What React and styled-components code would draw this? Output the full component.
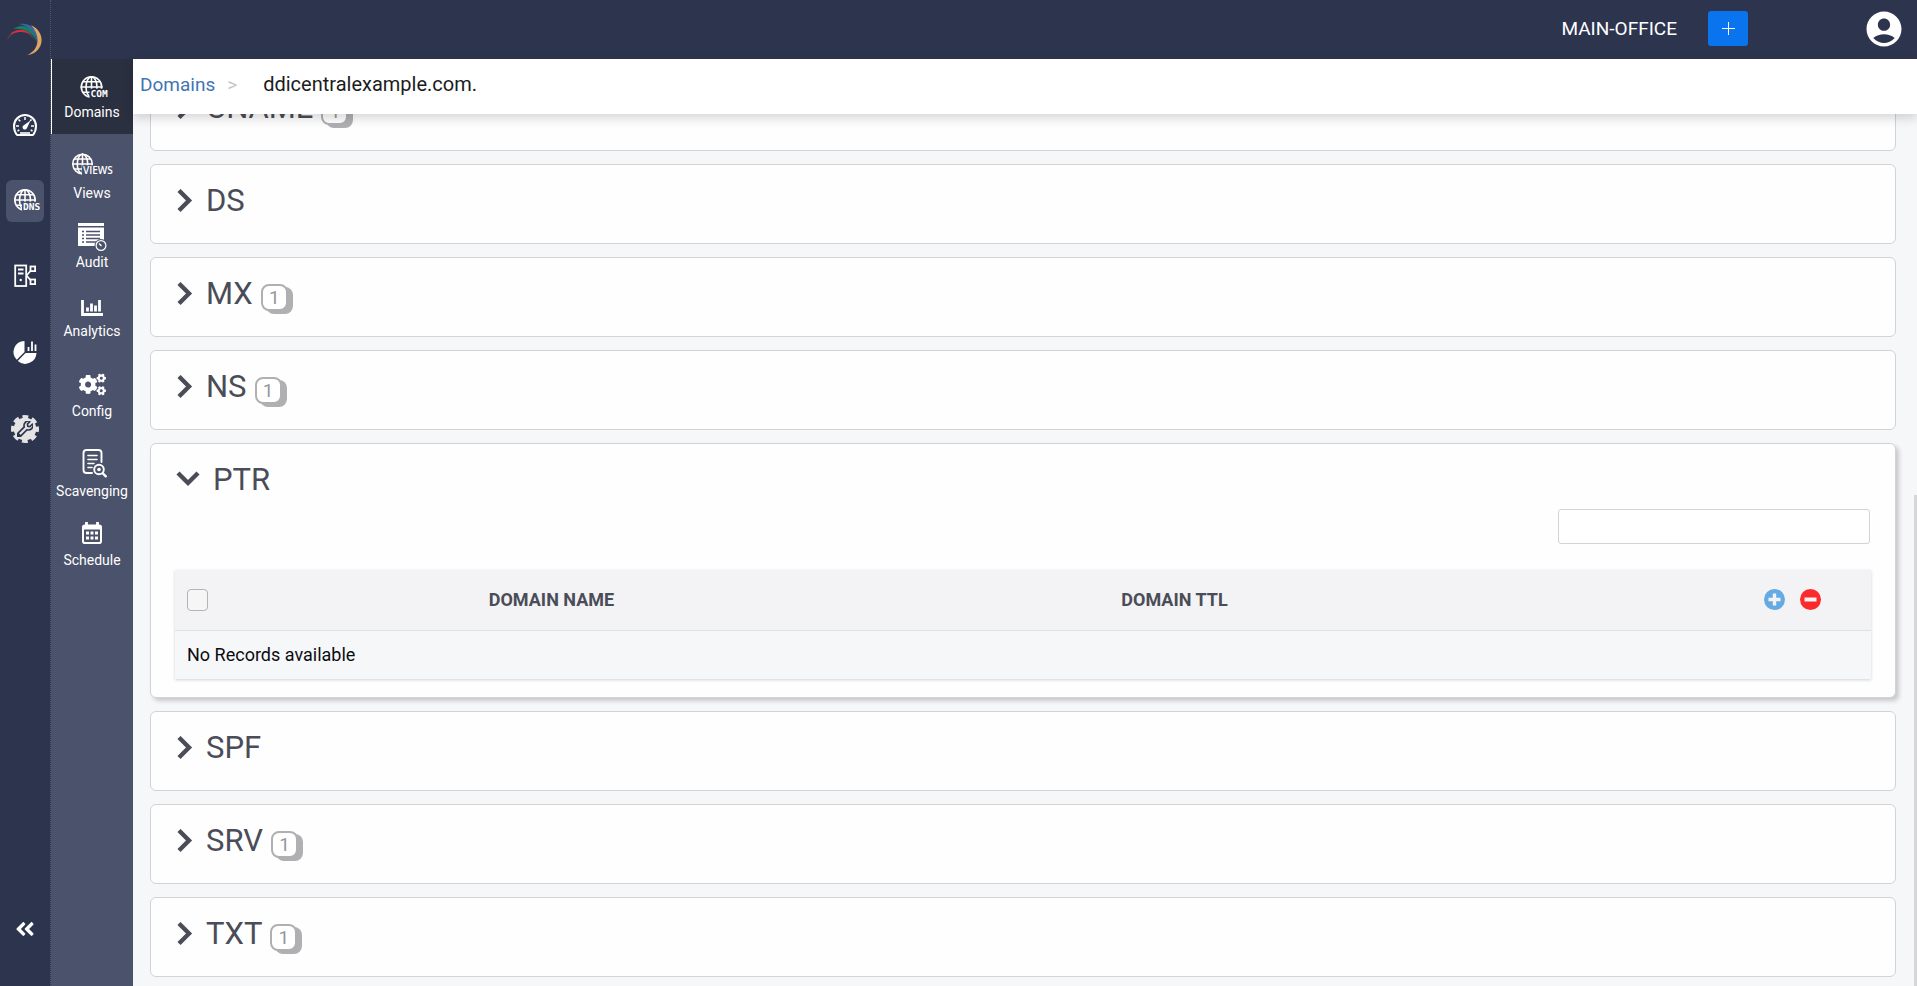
import { useLayoutEffect, useRef, useState } from "react";
import styled, { createGlobalStyle, css } from "styled-components";
import { FaAngleDoubleLeft, FaCogs, FaWrench } from "react-icons/fa";
import { MdAccountCircle } from "react-icons/md";

/* ---------------------------------- STYLE --------------------------------- */

const colors = {
    navy: "#2d344e",
    slate: "#4b526b",
    active: "#2b3041",
    page: "#f6f7f9",
    border: "#d2d3d5",
    title: "#4a4d58",
    badge: "#b0b0b2",
    link: "#3f75b5",
    blue: "#0a74ee",
};

const GlobalStyle = createGlobalStyle`
    * {
        box-sizing: border-box;
    }
    body {
        margin: 0;
        font-family: Roboto, "Liberation Sans", sans-serif;
        background: ${colors.page};
    }
    button {
        border: none;
        padding: 0;
        background: none;
        font-family: inherit;
        cursor: pointer;
    }
`;

const Shell = styled.div`
    display: grid;
    grid-template-columns: 51px 1fr;
    height: 100vh;
    overflow: hidden;
`;

const Rail = styled.nav`
    display: flex;
    flex-direction: column;
    align-items: center;
    background: ${colors.navy};
    border-right: 1px dotted #55575f;
`;

const Logo = styled.svg`
    width: 38px;
    height: 36px;
    margin: 22px 0 46px;
`;

const RailList = styled.div`
    display: flex;
    flex-direction: column;
    gap: 34px;
    flex: 1;
`;

const RailButton = styled.button`
    width: 38px;
    height: 42px;
    border-radius: 6px;
    background: ${props => props.$active ? colors.slate : "transparent"};
    svg {
        display: block;
    }
`;

const CollapseButton = styled.button`
    display: flex;
    align-items: center;
    justify-content: center;
    width: 38px;
    height: 42px;
    margin-bottom: 36px;
    color: white;
    font-size: 22px;
`;

const Content = styled.div`
    display: flex;
    flex-direction: column;
    min-width: 0;
    min-height: 0;
`;

const TopBar = styled.header`
    display: flex;
    align-items: center;
    justify-content: flex-end;
    height: 59px;
    flex-shrink: 0;
    padding: 0 15px 2px 0;
    background: ${colors.navy};
`;

const Office = styled.span`
    color: white;
    font-size: 19px;
`;

const AddButton = styled.button`
    display: flex;
    align-items: center;
    justify-content: center;
    width: 40px;
    height: 35px;
    margin: 0 118px 0 31px;
    border-radius: 3px;
    background: ${colors.blue};
`;

const UserButton = styled.button`
    display: flex;
    color: white;
    font-size: 42px;
    margin: 0 -3px;
`;

const Body = styled.div`
    display: grid;
    grid-template-columns: 82px 1fr;
    flex: 1;
    min-height: 0;
`;

const SubNav = styled.nav`
    background: ${colors.slate};
`;

const SubLink = styled.a`
    display: flex;
    flex-direction: column;
    align-items: center;
    padding-top: ${props => props.$spaced ? "26px" : "15px"};
    color: white;
    font-size: 14px;
    line-height: 20px;
    text-decoration: none;
    ${props => props.$active && css`
        padding: 9px 1px 12px 0;
        background: ${colors.active};
        border-left: 1px solid white;
    `}
`;

const Main = styled.main`
    position: relative;
    display: flex;
    flex-direction: column;
    min-width: 0;
    min-height: 0;
`;

const Breadcrumb = styled.div`
    display: flex;
    align-items: center;
    z-index: 1;
    height: 55px;
    flex-shrink: 0;
    padding: 0 7px 5px;
    background: white;
    box-shadow: 0 4px 10px rgba(0, 0, 0, 0.16);
    font-size: 19px;
    a {
        color: ${colors.link};
        text-decoration: none;
    }
    span {
        margin: 0 26px 0 12px;
        color: #c6c6c8;
    }
    strong {
        color: #1b1b22;
        font-size: 20px;
        font-weight: 400;
    }
`;

const RecordList = styled.div`
    display: flex;
    flex-direction: column;
    gap: 13px;
    flex: 1;
    min-height: 0;
    overflow-y: auto;
    scrollbar-width: none;
    padding: 0 21px 9px 17px;
`;

const ScrollThumb = styled.div`
    position: absolute;
    right: 0;
    bottom: 0;
    width: 3px;
    height: 53%;
    background: #d6d7d9;
`;

const Card = styled.section`
    flex-shrink: 0;
    min-height: 80px;
    padding: 18px 24px;
    background: #fefefe;
    border: 1px solid ${colors.border};
    border-radius: 6px;
    box-shadow: ${props => props.$open ? "3px 3px 4px #c9c9cb" : "none"};
`;

const CardHeader = styled.button`
    display: flex;
    align-items: center;
    height: 36px;
    padding-left: ${props => props.$open ? "1px" : "2px"};
    color: ${colors.title};
    font-size: 31px;
    line-height: 36px;
`;

const CardTitle = styled.span`
    display: flex;
    align-items: baseline;
    gap: 8px;
    margin-left: 13px;
`;

const Badge = styled.span`
    width: 27px;
    border: 2px solid ${colors.badge};
    border-radius: 8px;
    box-shadow: 5px 3px 0 ${colors.badge};
    background: white;
    color: #97979b;
    font-size: 19px;
    line-height: 23px;
    text-align: center;
`;

const SearchRow = styled.div`
    display: flex;
    justify-content: flex-end;
    margin: 11px 1px 26px 0;
`;

const SearchInput = styled.input`
    width: 312px;
    height: 35px;
    padding: 0 8px;
    border: 1px solid ${colors.border};
    border-radius: 3px;
    background: white;
    font-size: 16px;
    outline: none;
`;

const Table = styled.table`
    width: 100%;
    table-layout: fixed;
    border-collapse: collapse;
    box-shadow: 0 1px 3px rgba(0, 0, 0, 0.18);
    font-size: 18px;
    th {
        height: 60px;
        padding: 0;
        background: #f3f3f5;
        border-bottom: 1px solid #e0e1e3;
        color: ${colors.title};
        font-weight: 700;
        text-align: left;
    }
    th:first-child {
        width: 18.5%;
        padding-left: 12px;
    }
    th:nth-child(2) {
        width: 37.3%;
    }
    td {
        height: 49px;
        padding: 0 12px;
        background: ${colors.page};
        color: #0c0c10;
    }
`;

const CheckBox = styled.input`
    appearance: none;
    display: block;
    width: 21px;
    height: 22px;
    margin: 0;
    border: 1px solid #b4b4b6;
    border-radius: 4px;
    background: #f6f6f7;
`;

const Actions = styled.div`
    display: flex;
    justify-content: flex-end;
    gap: 15px;
    padding-right: 50px;
`;

const RoundButton = styled.button`
    display: flex;
    align-items: center;
    justify-content: center;
    width: 21px;
    height: 21px;
    border-radius: 50%;
    background: ${props => props.$danger ? "#fb2a2d" : "#65aae3"};
`;

/* ---------------------------------- ICONS --------------------------------- */

const Globe = ({ cx, cy, r }) => (
    <g fill="none" stroke="white" strokeWidth="1.6">
        <circle cx={cx} cy={cy} r={r - 0.8} />
        <ellipse cx={cx} cy={cy} rx={r * 0.5} ry={r - 0.8} />
        <path d={`M${cx} ${cy - r}V${cy + r}M${cx - r} ${cy}H${cx + r}`} />
        <path d={`M${cx - r * 0.84} ${cy - r * 0.48}H${cx + r * 0.84}M${cx - r * 0.84} ${cy + r * 0.48}H${cx + r * 0.84}`} />
    </g>
);

const GlobeLabel = ({ x, y, size, width, bg, family, weight, children }) => (
    <>
        <rect x={x - 1} y={y - size * 0.72 - 1.5} width={width + 3} height={size * 0.72 + 5} fill={bg} />
        <text x={x} y={y} fontSize={size} fontWeight={weight} fontFamily={family} fill="white">{children}</text>
    </>
);

const RailIcon = ({ children }) => <svg width="38" height="42" viewBox="0 0 38 42" aria-hidden="true">{children}</svg>;
const SubIcon = ({ children }) => <svg width="48" height="34" viewBox="0 0 48 34" aria-hidden="true">{children}</svg>;

const monoFont = "'DejaVu Sans Mono', monospace";

const GaugeIcon = () => (
    <RailIcon>
        <path d="M11 31C9 28.500 8 25.500 8 22A11 11 0 0 1 30 22C30 25.500 29 28.500 27 31Z" fill="none" stroke="white" strokeWidth="2" strokeLinejoin="round" />
        <path d="M14 29h10" stroke="white" strokeWidth="1.600" />
        <path d="M19 13v3M12.500 15.500l1.800 1.800M10 22h3M25.500 15.500l-1.400 1.400M28 22h-3M11.500 27l1.800 -1M26.500 27l-1.800 -1" stroke="white" strokeWidth="1.500" />
        <path d="M24.500 16.500l-3.500 7.500a2.300 2.300 0 1 1 -3.200 -2.800z" fill="white" />
    </RailIcon>
);

const DnsIcon = () => (
    <RailIcon>
        <Globe cx={19} cy={20} r={11} />
        <GlobeLabel x={17} y={30} size={9.5} width={17} bg={colors.slate} family={monoFont} weight="700">DNS</GlobeLabel>
    </RailIcon>
);

const ServerIcon = () => (
    <RailIcon>
        <g fill="none" stroke="white" strokeWidth="1.800">
            <rect x="9.200" y="9.500" width="11" height="20.500" />
            <path d="M12 13.500h5.500M12 17.500h5.500" />
            <rect x="24.500" y="10.500" width="4.600" height="4.600" />
            <rect x="24.500" y="23.500" width="4.600" height="4.600" />
            <path d="M20.500 19.500L24.500 15M20.500 19.500L24.500 24" />
        </g>
        <circle cx="14.700" cy="24" r="1.200" fill="white" />
    </RailIcon>
);

const PieIcon = () => (
    <RailIcon>
        <path d="M18.500 9V20L10.800 27.800A11 11 0 0 1 18.500 9Z" fill="white" />
        <path d="M19.500 21H30.500A11.300 11.300 0 0 1 11.800 29Z" fill="white" />
        <path d="M22.500 19v-4M26 19V9.500M29.500 19v-6.500" stroke="white" strokeWidth="1.800" />
    </RailIcon>
);

const GearIcon = () => (
    <RailIcon>
        <circle cx="19" cy="21" r="11.300" fill="#e4e4e4" />
        <circle cx="19" cy="21" r="12.200" fill="none" stroke="#e4e4e4" strokeWidth="3.600" strokeDasharray="5.800 3.782" strokeDashoffset="2.900" />
        <FaWrench x="11" y="13" size={16} color="#e4e4e4" stroke={colors.navy} strokeWidth="52" />
    </RailIcon>
);

const DomainsIcon = () => (
    <SubIcon>
        <Globe cx={23.5} cy={19} r={11} />
        <GlobeLabel x={22.5} y={29} size={9.5} width={17} bg={colors.active} family={monoFont} weight="700">COM</GlobeLabel>
    </SubIcon>
);

const ViewsIcon = () => (
    <SubIcon>
        <Globe cx={14.5} cy={15} r={10.5} />
        <GlobeLabel x={15} y={25} size={10} width={30} bg={colors.slate} family="'Open Sans', sans-serif" weight="600">VIEWS</GlobeLabel>
    </SubIcon>
);

const AuditIcon = () => (
    <SubIcon>
        <path d="M10 5h26v3h-26zM10 9.500h26v18.500h-26z" fill="white" />
        <path d="M14 13.500h2M14 17h2M14 20.500h2M14 24h2M18 13.500h14M18 17h14M18 20.500h14M18 24h10" stroke={colors.slate} strokeWidth="1.300" />
        <circle cx="33" cy="27.500" r="5.500" fill={colors.slate} stroke={colors.slate} strokeWidth="2" />
        <circle cx="33" cy="27.500" r="4.900" fill="none" stroke="white" strokeWidth="1.200" />
        <path d="M33.500 28l-2.500 -2.500" stroke="white" strokeWidth="1.400" />
    </SubIcon>
);

const AnalyticsIcon = () => (
    <SubIcon>
        <path d="M14.500 13v14.500h20.500" fill="none" stroke="white" strokeWidth="2.800" />
        <path d="M19.500 24.500v-4M23.500 24.500v-8M27.500 24.500v-6M31.500 24.500v-11.500" stroke="white" strokeWidth="2.800" />
    </SubIcon>
);

const ConfigIcon = () => (
    <SubIcon>
        <FaCogs x="11" y="4" size={27} />
    </SubIcon>
);

const ScavengingIcon = () => (
    <SubIcon>
        <g fill="none" stroke="white" strokeWidth="1.900" strokeLinecap="round">
            <path d="M24 26h-5.500a3 3 0 0 1 -3 -3V6a3 3 0 0 1 3 -3h12a3 3 0 0 1 3 3v9" />
            <path d="M20 8.500h9M20 12.500h9M20 16.500h6M20 20.500h4" strokeWidth="1.600" />
            <circle cx="31" cy="22.500" r="4.800" />
            <path d="M34.800 26.300l3 3" strokeWidth="2.400" />
        </g>
        <circle cx="31" cy="22.500" r="1.800" fill="white" />
    </SubIcon>
);

const ScheduleIcon = () => (
    <SubIcon>
        <path d="M18.500 6v4M29.500 6v4" stroke="white" strokeWidth="2.800" />
        <rect x="15" y="9.500" width="18" height="17.500" rx="1.800" fill="none" stroke="white" strokeWidth="2" />
        <path d="M15 9h18v4.500h-18z" fill="white" />
        <path d="M18 15.500h3v3h-3zM22.500 15.500h3v3h-3zM27 15.500h3v3h-3zM18 20.500h3v3h-3zM22.500 20.500h3v3h-3zM27 20.500h3v3h-3z" fill="white" />
    </SubIcon>
);

const Chevron = ({ open }) => open ? (
    <svg width="24" height="24" viewBox="0 0 24 24" aria-hidden="true">
        <path d="M2 5L12 15L22 5" fill="none" stroke="currentColor" strokeWidth="4.400" />
    </svg>
) : (
    <svg width="16" height="24" viewBox="0 0 16 24" aria-hidden="true">
        <path d="M2 1.500L12 11.500L2 21.500" fill="none" stroke="currentColor" strokeWidth="4.400" />
    </svg>
);

/* ----------------------------------- DOM ---------------------------------- */

const railItems = [
    { name: "Dashboard", Icon: GaugeIcon },
    { name: "DNS", Icon: DnsIcon, active: true },
    { name: "DHCP", Icon: ServerIcon },
    { name: "Reports", Icon: PieIcon },
    { name: "Settings", Icon: GearIcon },
];

const subItems = [
    { name: "Domains", Icon: DomainsIcon, active: true },
    { name: "Views", Icon: ViewsIcon },
    { name: "Audit", Icon: AuditIcon },
    { name: "Analytics", Icon: AnalyticsIcon },
    { name: "Config", Icon: ConfigIcon, spaced: true },
    { name: "Scavenging", Icon: ScavengingIcon, spaced: true },
    { name: "Schedule", Icon: ScheduleIcon },
];

const records = [
    { type: "CNAME", count: 1 },
    { type: "DS" },
    { type: "MX", count: 1 },
    { type: "NS", count: 1 },
    { type: "PTR" },
    { type: "SPF" },
    { type: "SRV", count: 1 },
    { type: "TXT", count: 1 },
];

function RecordTable() {
    return (
        <>
            <SearchRow>
                <SearchInput type="text" aria-label="Search records" />
            </SearchRow>
            <Table>
                <thead>
                    <tr>
                        <th><CheckBox type="checkbox" aria-label="Select all" /></th>
                        <th>DOMAIN NAME</th>
                        <th>DOMAIN TTL</th>
                        <th>
                            <Actions>
                                <RoundButton aria-label="Add record">
                                    <svg width="13" height="13" viewBox="0 0 13 13"><path d="M6.500 0.500v12M0.500 6.500h12" stroke="#f3f3f5" strokeWidth="3.400" /></svg>
                                </RoundButton>
                                <RoundButton $danger aria-label="Delete records">
                                    <svg width="13" height="13" viewBox="0 0 13 13"><path d="M0.500 6.500h12" stroke="#f3f3f5" strokeWidth="4" /></svg>
                                </RoundButton>
                            </Actions>
                        </th>
                    </tr>
                </thead>
                <tbody>
                    <tr>
                        <td colSpan={4}>No Records available</td>
                    </tr>
                </tbody>
            </Table>
        </>
    );
}

function App() {
    const list = useRef(null);
    const [opened, setOpened] = useState("PTR");

    // The list opens on its last records
    useLayoutEffect(() => {
        list.current.scrollTop = list.current.scrollHeight;
    }, []);

    return (
        <Shell>
            <GlobalStyle />
            <Rail>
                <Logo viewBox="0 0 38 36" aria-hidden="true">
                    <path d="M1 19C3 11 10 7 17 8C23 9 26 13 28 18C23 11 18 9 13 10C7 11 3 14 1 19Z" fill="#7b3b4c" />
                    <path d="M5 11C11 7 19 7 25 12C21 10 12 9 5 12Z" fill="#e02b3c" />
                    <path d="M7 7C16 1 29 4 30 19C26 10 18 6 7 7Z" fill="#168060" />
                    <path d="M13 2C25 0 34 9 31 21C30 11 24 4 13 2Z" fill="#3c67a8" />
                    <path d="M25 3C42 11 37 32 21 33C32 29 36 15 25 3Z" fill="#dfa564" />
                </Logo>
                <RailList>
                    {railItems.map(({ name, Icon, active }) => (
                        <RailButton key={name} $active={active} aria-label={name}><Icon /></RailButton>
                    ))}
                </RailList>
                <CollapseButton aria-label="Collapse menu"><FaAngleDoubleLeft /></CollapseButton>
            </Rail>
            <Content>
                <TopBar>
                    <Office>MAIN-OFFICE</Office>
                    <AddButton aria-label="Add">
                        <svg width="13" height="13" viewBox="0 0 13 13"><path d="M6.500 0v13M0 6.500h13" stroke="white" strokeWidth="1" /></svg>
                    </AddButton>
                    <UserButton aria-label="Account"><MdAccountCircle /></UserButton>
                </TopBar>
                <Body>
                    <SubNav>
                        {subItems.map(({ name, Icon, active, spaced }) => (
                            <SubLink key={name} href="#" $active={active} $spaced={spaced}>
                                <Icon />
                                {name}
                            </SubLink>
                        ))}
                    </SubNav>
                    <Main>
                        <Breadcrumb>
                            <a href="#">Domains</a>
                            <span>&gt;</span>
                            <strong>ddicentralexample.com.</strong>
                        </Breadcrumb>
                        <RecordList ref={list}>
                            {records.map(({ type, count }) => {
                                const open = opened === type;
                                return (
                                    <Card key={type} $open={open}>
                                        <CardHeader $open={open} aria-expanded={open} onClick={() => setOpened(open ? null : type)}>
                                            <Chevron open={open} />
                                            <CardTitle>
                                                {type}
                                                {count && <Badge>{count}</Badge>}
                                            </CardTitle>
                                        </CardHeader>
                                        {open && <RecordTable />}
                                    </Card>
                                );
                            })}
                        </RecordList>
                        <ScrollThumb />
                    </Main>
                </Body>
            </Content>
        </Shell>
    );
}

export default App;
